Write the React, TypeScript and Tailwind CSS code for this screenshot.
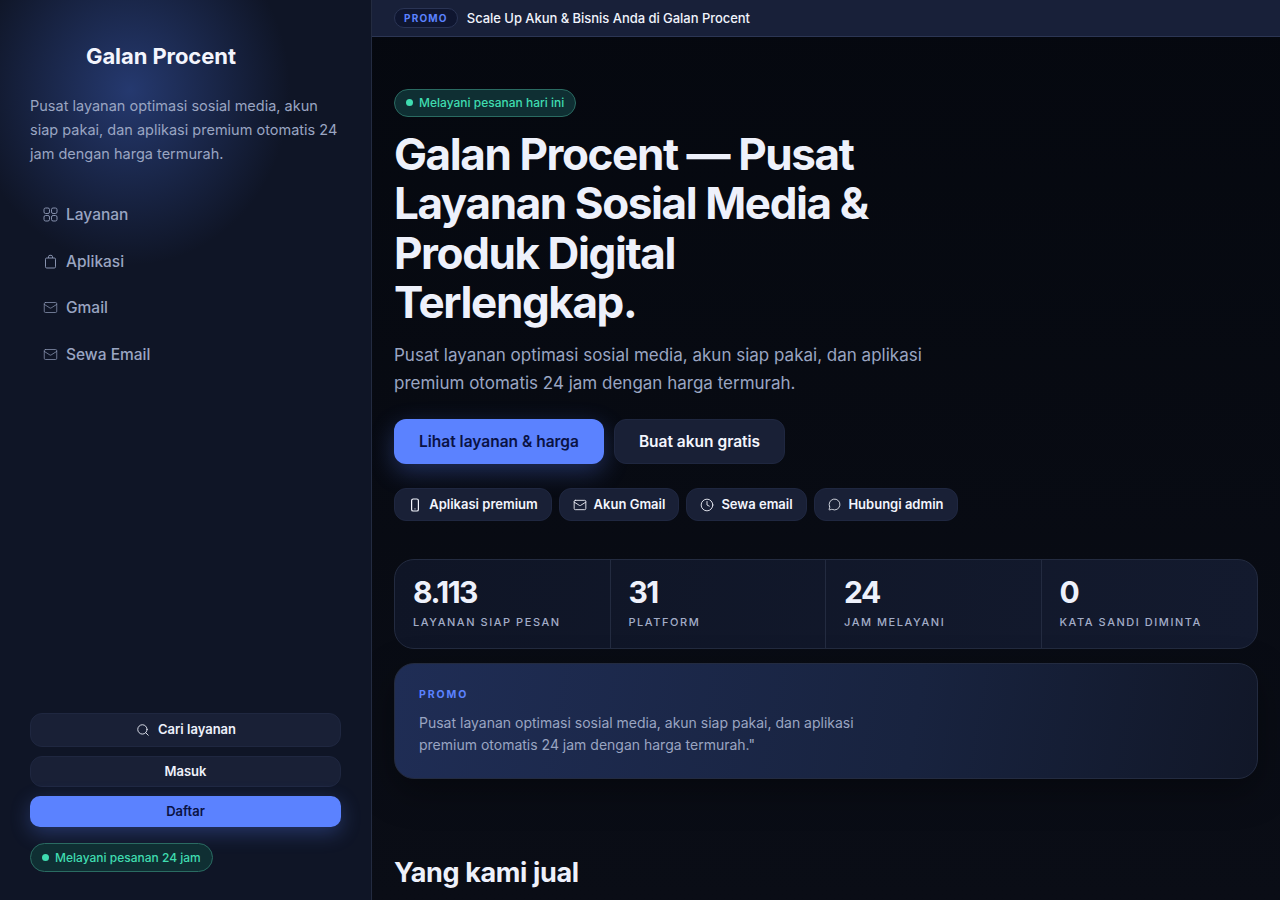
import { Mail, Search, Clock, MessageCircle } from "lucide-react";

const heading = "font-['Inter',sans-serif]";

function Pill({ label, className = "" }: { label: string; className?: string }) {
  return (
    <div className={`inline-flex items-center gap-[6px] rounded-full border border-[#2a6b62] bg-[#0f2f33] text-[12px] font-medium text-[#3fdcb0] ${className}`}>
      <span className="h-[7px] w-[7px] rounded-full bg-[#3fdcb0]" />
      {label}
    </div>
  );
}

function GridIcon() {
  return (
    <svg width="15" height="15" viewBox="0 0 15 15" fill="none" stroke="currentColor" strokeWidth="1" className="text-[#8792ae]">
      <rect x="1" y="1" width="5.5" height="5.5" rx="1.6" />
      <rect x="8.5" y="1" width="5.5" height="5.5" rx="1.6" />
      <rect x="1" y="8.5" width="5.5" height="5.5" rx="1.6" />
      <rect x="8.5" y="8.5" width="5.5" height="5.5" rx="1.6" />
    </svg>
  );
}

function BagIcon() {
  return (
    <svg width="15" height="15" viewBox="0 0 15 15" fill="none" stroke="currentColor" strokeWidth="1" className="text-[#8792ae]">
      <rect x="2.5" y="4" width="10" height="10" rx="1.2" />
      <path d="M5.5 4V2.8A1.5 1.5 0 0 1 7 1.3h1a1.5 1.5 0 0 1 1.5 1.5V4" />
    </svg>
  );
}

function PhoneIcon() {
  return (
    <svg width="14" height="14" viewBox="0 0 14 14" fill="none" stroke="currentColor" strokeWidth="1.2">
      <rect x="3.6" y="1" width="6.8" height="12" rx="1.6" />
      <path d="M6.6 10.8h.8" />
    </svg>
  );
}

const nav = [
  { label: "Layanan", icon: <GridIcon /> },
  { label: "Aplikasi", icon: <BagIcon /> },
  { label: "Gmail", icon: <Mail size={15} strokeWidth={1.25} className="text-[#8792ae]" /> },
  { label: "Sewa Email", icon: <Mail size={15} strokeWidth={1.25} className="text-[#8792ae]" /> },
];

const chips = [
  { label: "Aplikasi premium", icon: <PhoneIcon />, w: "w-[158px]" },
  { label: "Akun Gmail", icon: <Mail size={14} strokeWidth={1.5} />, w: "w-[120px]" },
  { label: "Sewa email", icon: <Clock size={14} strokeWidth={1.5} />, w: "w-[121px]" },
  { label: "Hubungi admin", icon: <MessageCircle size={13} strokeWidth={1.5} />, w: "w-[144px]" },
];

const stats = [
  { value: "8.113", label: "LAYANAN SIAP PESAN" },
  { value: "31", label: "PLATFORM" },
  { value: "24", label: "JAM MELAYANI" },
  { value: "0", label: "KATA SANDI DIMINTA" },
];

export default function App() {
  return (
    <div className="flex h-[900px] w-[1280px] overflow-hidden bg-[linear-gradient(180deg,#05080f_0%,#0a0d16_100%)] font-['Inter',sans-serif] text-[#eef1fb]">
      <aside className="relative flex h-full w-[372px] shrink-0 flex-col overflow-hidden border-r border-[#232b40] bg-[#0f1526] px-[30px]">
        <div className="pointer-events-none absolute left-[-30px] top-[-85px] h-[350px] w-[320px] bg-[radial-gradient(closest-side,#25396f_0%,rgba(37,57,111,0.55)_45%,rgba(37,57,111,0)_100%)]" />
        <div className="relative flex flex-1 flex-col">
          <div className={`${heading} ml-[56px] mt-[42px] text-[22px] font-bold leading-[28px] tracking-[-0.08px] text-[#f3f5fd]`}>Galan Procent</div>
          <p className="mt-[24px] text-[14.5px] leading-[24px] text-[#9aa5c2]">
            Pusat layanan optimasi sosial media, akun siap pakai, dan aplikasi premium otomatis 24 jam dengan harga termurah.
          </p>
          <nav className="mt-[25.4px] flex flex-col">
            {nav.map(({ label, icon }) => (
              <div key={label} className="flex h-[46.6px] items-center gap-[8px] pl-[13px] text-[15.5px] font-medium text-[#9aa5c2]">
                {icon}
                {label}
              </div>
            ))}
          </nav>
          <div className="mt-auto mb-[28px] flex flex-col">
            <div className="flex h-[34px] items-center justify-center gap-[8px] rounded-[12px] border border-[#1f2740] bg-[#192036] pb-[1px] pl-[1px] text-[13px] font-semibold">
              <Search size={14} strokeWidth={1.5} />
              Cari layanan
            </div>
            <div className="mt-[9px] flex h-[31px] items-center justify-center rounded-[12px] border border-[#1f2740] bg-[#192036] text-[13px] font-semibold">Masuk</div>
            <div className="mt-[9px] flex h-[31px] items-center justify-center rounded-[10px] bg-[#5b82ff] text-[13px] font-semibold text-[#0a1244] shadow-[0_6px_20px_rgba(91,130,255,0.3)]">Daftar</div>
            <Pill label="Melayani pesanan 24 jam" className="mt-[16px] h-[29px] self-start px-[11px] text-[12.5px]" />
          </div>
        </div>
      </aside>

      <main className="flex h-full min-w-0 flex-1 flex-col overflow-hidden">
        <div className="flex h-[37px] shrink-0 items-center gap-[9px] border-b border-[#2c3654] bg-[#182039] pl-[22px]">
          <span className="flex h-[20px] items-center rounded-full border border-[#2a3454] bg-[#0f1630] px-[9px] text-[10px] font-bold tracking-[0.12em] text-[#5b82ff]">PROMO</span>
          <span className="pt-[1px] text-[13px] font-medium tracking-[-0.04px] text-[#f0f3fc]">Scale Up Akun &amp; Bisnis Anda di Galan Procent</span>
        </div>

        <div className="px-[22px]">
          <Pill label="Melayani pesanan hari ini" className="mt-[52px] h-[28px] px-[11px] pb-[1px]" />
          <h1 className={`${heading} mt-[13px] max-w-[500px] text-[44px] font-bold leading-[49.3px] tracking-[-1.4px] text-[#eef1fb]`}>
            Galan Procent — Pusat Layanan Sosial Media &amp; Produk Digital Terlengkap.
          </h1>
          <p className="mt-[14px] max-w-[560px] text-[17px] leading-[28px] text-[#9aa5c2]">
            Pusat layanan optimasi sosial media, akun siap pakai, dan aplikasi premium otomatis 24 jam dengan harga termurah.
          </p>
          <div className="mt-[22px] flex gap-[10px]">
            <div className="flex h-[45px] w-[210px] items-center justify-center rounded-[12px] bg-[#5b82ff] text-[15.5px] font-semibold text-[#0a1244] shadow-[0_8px_24px_rgba(91,130,255,0.3)]">Lihat layanan &amp; harga</div>
            <div className="flex h-[45px] w-[171px] items-center justify-center rounded-[12px] border border-[#1f2740] bg-[#192036] text-[15.5px] font-semibold text-[#f3f5fd]">Buat akun gratis</div>
          </div>
          <div className="mt-[24px] flex gap-[7px]">
            {chips.map(({ label, icon, w }) => (
              <div key={label} className={`flex h-[33px] ${w} items-center justify-center gap-[7px] rounded-[12px] border border-[#1f2740] bg-[#192036] text-[13px] font-semibold text-[#f3f5fd]`}>
                {icon}
                {label}
              </div>
            ))}
          </div>

          <div className="mt-[38px] grid h-[90px] grid-cols-4 overflow-hidden rounded-[20px] border border-[#232b40] bg-[linear-gradient(100deg,#0f1526_0%,#131a2e_100%)]">
            {stats.map((s, i) => (
              <div key={s.label} className={`px-[18px] pt-[14px] ${i < 3 ? "border-r border-[#232b40]" : ""}`}>
                <div className={`${heading} text-[30px] font-bold leading-[36px] tracking-[-0.05em] text-[#eef1fb]`}>{s.value}</div>
                <div className="mt-[4px] text-[11px] font-medium tracking-[0.14em] text-[#a3adc8]">{s.label}</div>
              </div>
            ))}
          </div>

          <div className="mt-[14px] h-[116px] rounded-[20px] border border-[#232b40] bg-[linear-gradient(100deg,#1f2d55_0%,#18233f_60%,#111728_100%)] px-[24px] pt-[24px] shadow-[0_12px_36px_rgba(0,0,0,0.35)]">
            <div className="text-[10.5px] font-bold leading-[14px] tracking-[0.18em] text-[#5b82ff]">PROMO</div>
            <p className="mt-[10px] max-w-[480px] text-[14px] leading-[22px] text-[#9aa5c2]">
              Pusat layanan optimasi sosial media, akun siap pakai, dan aplikasi premium otomatis 24 jam dengan harga termurah."
            </p>
          </div>

          <h2 className={`${heading} mt-[76px] text-[27px] font-bold leading-[36px] tracking-[-0.35px] text-[#eef1fb]`}>Yang kami jual</h2>
          <p className="mt-[9px] text-[14px] leading-[22px] text-[#9aa5c2]">Layanan, akun, dan aplikasi yang siap dipesan kapan saja.</p>
        </div>
      </main>
    </div>
  );
}
